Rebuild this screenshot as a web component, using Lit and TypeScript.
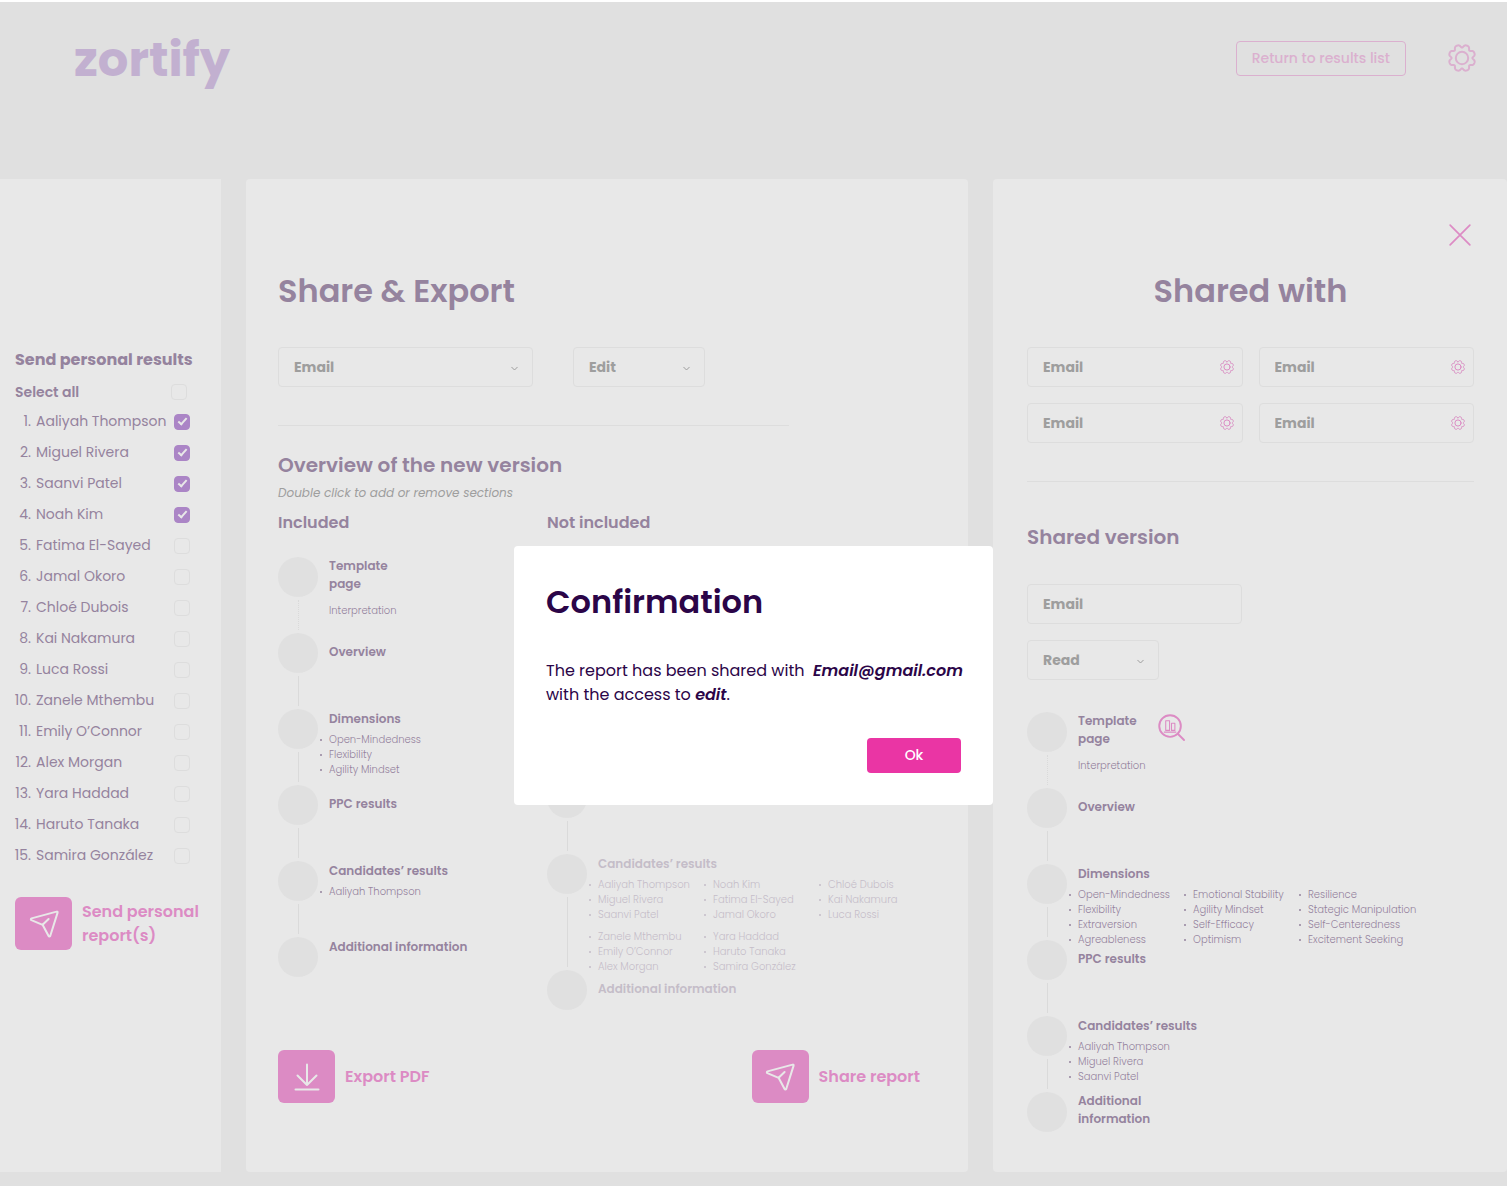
import { LitElement, html, css, svg, nothing } from "lit";
import { customElement, property, state } from "lit/decorators.js";

interface Section {
  title?: string;
  note?: string;
  /** Each block is a row of bulleted columns. */
  blocks?: string[][][];
  centered?: boolean;
  narrow?: boolean;
  tall?: boolean;
  dotted?: boolean;
  preview?: boolean;
}

/** Outline of an eight-lobed cog around (14, 14). */
const cogPath = (() => {
  const points: string[] = [];
  const steps = 160;
  for (let i = 0; i < steps; i++) {
    const a = (i / steps) * Math.PI * 2;
    const r = 13.3 - 2.9 * Math.pow(Math.cos(4 * a), 4);
    points.push(`${(14 + r * Math.sin(a)).toFixed(2)} ${(14 - r * Math.cos(a)).toFixed(2)}`);
  }
  return `M${points.join("L")}Z`;
})();

const icons = {
  cog: svg`<path d=${cogPath}/><circle cx="14" cy="14" r="6.2"/>`,
  close: svg`<path d="M2.5 2.5 25.5 25.5M25.5 2.5 2.5 25.5"/>`,
  chevron: svg`<path d="M3 9 14 20 25 9"/>`,
  send: svg`<path d="M26.6 1.6 1.5 8.4a.9.9 0 0 0-.1 1.7L12.6 14.8 18.6 26a.9.9 0 0 0 1.7-.2L27.6 2.6a.8.8 0 0 0-1-1ZM12.6 14.8 18.6 9"/>`,
  download: svg`<path d="M14 1.5V22M4.5 12.5 14 22 23.5 12.5M2.5 26.5H25.5"/>`,
  preview: svg`<circle cx="12.5" cy="12.5" r="11.2"/><path d="M20.5 20.5 27 27"/><path class="thin" d="M8 7h4v10H8zM14 9.5h3.5V17H14zM6.5 18.8h12"/>`,
};

@customElement("line-icon")
export class LineIcon extends LitElement {
  @property() name: keyof typeof icons = "cog";

  static styles = css`
    :host { display: inline-flex; width: 28px; height: 28px; flex: none; }
    svg {
      width: 100%; height: 100%; overflow: visible; fill: none; stroke: currentColor;
      stroke-width: var(--stroke, 2); stroke-linecap: round; stroke-linejoin: round;
    }
    .thin { stroke-width: 1.1; }
  `;

  render() {
    return html`<svg viewBox="0 0 28 28" aria-hidden="true">${icons[this.name]}</svg>`;
  }
}

@customElement("section-timeline")
export class SectionTimeline extends LitElement {
  @property({ attribute: false }) sections: Section[] = [];
  @property({ type: Boolean, reflect: true }) muted = false;

  static styles = css`
    :host { display: block; color: #95839e; }
    :host([muted]) .body { opacity: 0.42; }
    ol, ul { list-style: none; margin: 0; padding: 0; }
    .step { display: flex; gap: 11px; height: 76px; }
    .step.tall { height: 116px; }
    .step:last-child { height: 40px; }
    .rail { display: flex; flex-direction: column; align-items: center; flex: none; width: 40px; }
    .dot { flex: none; width: 40px; height: 40px; border-radius: 50%; background: #e0e0e0; }
    .line { flex: 1; margin: 3px 0; border-left: 1px solid #dadada; }
    .line.dotted { border-left-style: dotted; }
    .body { flex: 1; min-width: 0; padding-top: 1px; }
    .body.centered { padding-top: 10px; }
    .body.narrow { padding-top: 0; }
    .head { display: flex; gap: 21px; height: 18px; }
    .title { margin: 0; font-size: 12px; line-height: 18px; font-weight: 600; white-space: nowrap; }
    .narrow .title { width: 59px; white-space: normal; }
    .narrow .head { height: auto; }
    .note { margin: 10px 0 0; font-size: 10px; line-height: 15px; font-weight: 300; }
    .block { display: flex; margin: 4px 0 7px; }
    .block + .block { margin-top: 0; }
    .column { flex: none; width: 115px; }
    .item { position: relative; font-size: 10px; line-height: 15px; font-weight: 300; white-space: nowrap; }
    .item::before {
      content: ""; position: absolute; left: -9px; top: 7px;
      width: 2px; height: 2px; border-radius: 1px; background: currentColor;
    }
    line-icon { width: 27px; height: 27px; margin-top: 2px; color: #dc8bc4; }
  `;

  private renderBody(s: Section) {
    return html`<div class="body ${s.centered ? "centered" : ""} ${s.narrow ? "narrow" : ""}">
      <div class="head">
        <h4 class="title">${s.title}</h4>
        ${s.preview ? html`<line-icon name="preview"></line-icon>` : nothing}
      </div>
      ${s.note ? html`<p class="note">${s.note}</p>` : nothing}
      ${(s.blocks ?? []).map(
        (block) => html`<div class="block">
          ${block.map(
            (column) => html`<ul class="column">
              ${column.map((item) => html`<li class="item">${item}</li>`)}
            </ul>`
          )}
        </div>`
      )}
    </div>`;
  }

  render() {
    const last = this.sections.length - 1;
    return html`<ol>
      ${this.sections.map(
        (s, i) => html`<li class="step ${s.tall ? "tall" : ""}">
          <div class="rail">
            <span class="dot"></span>
            ${i < last ? html`<span class="line ${s.dotted ? "dotted" : ""}"></span>` : nothing}
          </div>
          ${s.title ? this.renderBody(s) : nothing}
        </li>`
      )}
    </ol>`;
  }
}

const people = [
  "Aaliyah Thompson", "Miguel Rivera", "Saanvi Patel", "Noah Kim", "Fatima El-Sayed",
  "Jamal Okoro", "Chloé Dubois", "Kai Nakamura", "Luca Rossi", "Zanele Mthembu",
  "Emily O’Connor", "Alex Morgan", "Yara Haddad", "Haruto Tanaka", "Samira González",
];

const included: Section[] = [
  { title: "Template page", note: "Interpretation", narrow: true, dotted: true },
  { title: "Overview", centered: true },
  { title: "Dimensions", blocks: [[["Open-Mindedness", "Flexibility", "Agility Mindset"]]] },
  { title: "PPC results", centered: true },
  { title: "Candidates’ results", blocks: [[["Aaliyah Thompson"]]] },
  { title: "Additional information" },
];

/** The leading steps are free slots. */
const notIncluded: Section[] = [
  {},
  {},
  {},
  {},
  {
    title: "Candidates’ results",
    tall: true,
    blocks: [
      [people.slice(0, 3), people.slice(3, 6), people.slice(6, 9)],
      [people.slice(9, 12), people.slice(12, 15)],
    ],
  },
  { title: "Additional information", centered: true },
];

const shared: Section[] = [
  { title: "Template page", note: "Interpretation", narrow: true, dotted: true, preview: true },
  { title: "Overview", centered: true },
  {
    title: "Dimensions",
    blocks: [[
      ["Open-Mindedness", "Flexibility", "Extraversion", "Agreableness"],
      ["Emotional Stability", "Agility Mindset", "Self-Efficacy", "Optimism"],
      ["Resilience", "Stategic Manipulation", "Self-Centeredness", "Excitement Seeking"],
    ]],
  },
  { title: "PPC results", centered: true },
  { title: "Candidates’ results", blocks: [[["Aaliyah Thompson", "Miguel Rivera", "Saanvi Patel"]]] },
  { title: "Additional information", narrow: true },
];

@customElement("app-root")
export class AppRoot extends LitElement {
  @state() private selected = new Set([0, 1, 2, 3]);
  @state() private confirming = true;

  static styles = css`
    :host {
      display: block;
      font-family: Poppins, Inter, "Open Sans", sans-serif;
      color: #95839e;
    }
    * { box-sizing: border-box; }
    h1, h2, h3, p, ol { margin: 0; padding: 0; }
    button, input, select { font: inherit; color: inherit; }
    button { border: 0; padding: 0; background: none; cursor: pointer; }

    .stage { position: relative; margin: 2px 3px 4px 0; padding-bottom: 14px; background: #e0e0e0; }
    .topbar { display: flex; align-items: flex-start; height: 177px; padding: 28px 31px 0 74px; }
    .logo {
      margin-right: auto; color: #c2b0d0; text-decoration: none;
      font-weight: 700; font-size: 48px; line-height: 60px;
    }
    .return {
      height: 35px; margin: 11px 42px 0 0; padding: 0 15px; border: 1px solid #dbb0cf; border-radius: 4px;
      color: #dbb0cf; font-size: 14px; font-weight: 500;
    }
    .settings { display: flex; margin-top: 14px; color: #dbb0cf; }

    .panels { display: grid; grid-template-columns: 221px minmax(0, 722fr) minmax(0, 514fr); gap: 25px; }
    .panel { background: #e8e8e8; border-radius: 4px; }

    .people { padding: 169px 31px 40px 15px; border-radius: 0; }
    .people-title { font-size: 16px; line-height: 24px; font-weight: 700; white-space: nowrap; }
    .select-all {
      display: flex; align-items: center; justify-content: space-between;
      height: 28px; margin-top: 6px; padding-right: 3px; font-size: 14px; font-weight: 600;
    }
    .names { list-style: none; }
    .person { display: flex; align-items: center; height: 31px; font-size: 14px; white-space: nowrap; }
    .person-label { display: flex; flex: 1; gap: 5px; }
    .number { width: 16px; display: flex; justify-content: flex-end; }
    .check {
      appearance: none; flex: none; width: 16px; height: 16px; margin: 0;
      border: 1px solid #dddddd; border-radius: 4px; display: grid; place-items: center;
    }
    .check:checked { background: #ab85c6; border-color: #ab85c6; }
    .check:checked::after {
      content: ""; box-sizing: border-box; width: 5px; height: 9px; margin-bottom: 2px; transform: rotate(42deg);
      border: solid #e8e8e8; border-width: 0 2px 2px 0;
    }

    .action {
      display: inline-flex; align-items: center; gap: 10px; text-align: left;
      color: #dc8bc4; font-size: 16px; line-height: 24px; font-weight: 600; white-space: nowrap;
    }
    .tile {
      display: flex; align-items: center; justify-content: center; width: 57px; height: 53px;
      border-radius: 6px; background: #dc8bc4; color: #e8e8e8;
    }
    .send { margin-top: 26px; }

    .editor { padding: 88px 32px 69px; }
    .title { font-size: 32px; line-height: 48px; font-weight: 600; }
    .fields { display: flex; gap: 40px; margin-top: 32px; }
    .field { display: grid; align-items: center; }
    .field > * { grid-area: 1 / 1; }
    .control {
      appearance: none; width: 100%; height: 40px; padding: 0 15px; border: 1px solid #dddddd; border-radius: 4px;
      background: none; outline: none; color: #9e9e9e; font-size: 14px; font-weight: 700;
    }
    .field line-icon { justify-self: end; }
    .chevron { width: 7px; height: 7px; margin: 2px 15px 0 0; color: #9e9e9e; --stroke: 4; pointer-events: none; }
    .wide { width: 255px; }
    .short { width: 132px; }
    .rule { margin: 38px 0 0; border: 0; border-top: 1px solid #dddddd; }
    .editor .rule { width: 511px; }
    .subtitle { font-size: 20px; line-height: 30px; font-weight: 600; }
    .editor .subtitle { margin-top: 24px; }
    .hint { margin-top: 4px; color: #9e9e9e; font-size: 12px; line-height: 18px; font-style: italic; }
    .versions { display: grid; grid-template-columns: 269px minmax(0, 1fr); margin-top: 9px; }
    .column-title { margin-bottom: 22px; font-size: 16px; line-height: 24px; font-weight: 600; }
    .excluded .column-title { margin-bottom: 15px; }
    .actions { display: flex; justify-content: space-between; margin-top: 40px; padding-right: 16px; }

    .sharing { padding: 44px 33px 39px 34px; }
    .close { display: flex; margin: 0 0 20px auto; color: #dc8bc4; }
    .close line-icon { width: 28px; height: 24px; }
    .sharing .title { text-align: center; }
    .shares { display: grid; grid-template-columns: 1fr 1fr; gap: 16px; margin-top: 32px; }
    .mini { display: flex; justify-self: end; margin-right: 9px; color: #dc8bc4; }
    .mini line-icon { width: 14px; height: 14px; }
    .sharing .subtitle { margin-top: 40px; }
    .version { display: grid; gap: 16px; margin: 32px 0; }
    .half { width: 215px; }

    .dialog {
      position: absolute; inset: 544px 0 auto; margin: 0 auto; width: 479px; padding: 32px;
      border: 0; border-radius: 4px; background: #ffffff; color: #2b0548;
    }
    .message { margin-top: 33px; font-size: 16px; line-height: 24px; white-space: nowrap; }
    .message em { font-weight: 600; }
    .ok {
      display: block; width: 94px; height: 35px; margin: 31px 0 0 auto; border-radius: 4px;
      background: #ea35a4; color: #ffffff; font-size: 14px; font-weight: 500;
    }
  `;

  private toggle(index: number) {
    const next = new Set(this.selected);
    next.has(index) ? next.delete(index) : next.add(index);
    this.selected = next;
  }

  private toggleAll(event: Event) {
    const on = (event.target as HTMLInputElement).checked;
    this.selected = new Set(on ? people.keys() : []);
  }

  private renderPeople() {
    return html`<aside class="panel people">
      <h2 class="people-title">Send personal results</h2>
      <div class="select-all">
        <label for="all">Select all</label>
        <input class="check" id="all" type="checkbox"
          .checked=${this.selected.size === people.length} @change=${this.toggleAll} />
      </div>
      <ol class="names">
        ${people.map(
          (name, i) => html`<li class="person">
            <label class="person-label" for="person-${i}">
              <span class="number">${i + 1}.</span><span>${name}</span>
            </label>
            <input class="check" id="person-${i}" type="checkbox"
              .checked=${this.selected.has(i)} @change=${() => this.toggle(i)} />
          </li>`
        )}
      </ol>
      <button class="action send">
        <span class="tile"><line-icon name="send"></line-icon></span>
        <span>Send personal<br />report(s)</span>
      </button>
    </aside>`;
  }

  private renderSelect(label: string, value: string, size: string) {
    return html`<div class="field ${size}">
      <select class="control" aria-label=${label}>
        <option>${value}</option>
      </select>
      <line-icon class="chevron" name="chevron"></line-icon>
    </div>`;
  }

  private renderEditor() {
    return html`<main class="panel editor">
      <h1 class="title">Share &amp; Export</h1>
      <div class="fields">
        ${this.renderSelect("Recipient", "Email", "wide")}
        ${this.renderSelect("Access", "Edit", "short")}
      </div>
      <hr class="rule" />
      <h2 class="subtitle">Overview of the new version</h2>
      <p class="hint">Double click to add or remove sections</p>
      <div class="versions">
        <section>
          <h3 class="column-title">Included</h3>
          <section-timeline .sections=${included}></section-timeline>
        </section>
        <section class="excluded">
          <h3 class="column-title">Not included</h3>
          <section-timeline muted .sections=${notIncluded}></section-timeline>
        </section>
      </div>
      <div class="actions">
        <button class="action">
          <span class="tile"><line-icon name="download"></line-icon></span>Export PDF
        </button>
        <button class="action">
          <span class="tile"><line-icon name="send"></line-icon></span>Share report
        </button>
      </div>
    </main>`;
  }

  private renderSharing() {
    return html`<aside class="panel sharing">
      <button class="close" aria-label="Close"><line-icon name="close"></line-icon></button>
      <h2 class="title">Shared with</h2>
      <div class="shares">
        ${[1, 2, 3, 4].map(
          (n) => html`<div class="field">
            <input class="control" type="text" aria-label="Recipient ${n}" value="Email" />
            <button class="mini" aria-label="Settings of recipient ${n}"><line-icon name="cog"></line-icon></button>
          </div>`
        )}
      </div>
      <hr class="rule" />
      <h3 class="subtitle">Shared version</h3>
      <div class="version">
        <input class="control half" type="text" aria-label="Recipient of the version" value="Email" />
        ${this.renderSelect("Access to the version", "Read", "short")}
      </div>
      <section-timeline .sections=${shared}></section-timeline>
    </aside>`;
  }

  render() {
    return html`<div class="stage">
      <header class="topbar">
        <a class="logo" href="#">zortify</a>
        <button class="return">Return to results list</button>
        <button class="settings" aria-label="Settings"><line-icon name="cog"></line-icon></button>
      </header>
      <div class="panels">${this.renderPeople()} ${this.renderEditor()} ${this.renderSharing()}</div>
      ${this.confirming
        ? html`<dialog open class="dialog" aria-labelledby="confirm-title">
            <h2 class="title" id="confirm-title">Confirmation</h2>
            <p class="message">
              The report has been shared with &nbsp;<em>Email@gmail.com</em><br />
              with the access to <em>edit</em>.
            </p>
            <button class="ok" @click=${() => (this.confirming = false)}>Ok</button>
          </dialog>`
        : nothing}
    </div>`;
  }
}
